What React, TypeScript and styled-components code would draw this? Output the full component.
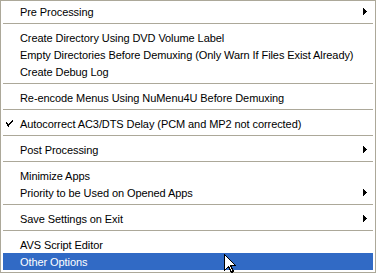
import * as React from "react";
import styled, { createGlobalStyle } from "styled-components";

const GlobalStyle = createGlobalStyle`
  html, body {
    margin: 0;
    padding: 0;
    background: #ffffff;
  }
`;

const Stage = styled.div`
  position: relative;
  width: 376px;
  height: 273px;
  overflow: hidden;
`;

const Menu = styled.ul`
  list-style: none;
  margin: 0;
  width: 376px;
  height: 273px;
  box-sizing: border-box;
  padding: 2px;
  border: 1px solid #aca899;
  background: #ffffff;
  font-family: Tahoma, "Liberation Sans", Arial, sans-serif;
  font-size: 11px;
  letter-spacing: -0.08px;
  color: #000000;
`;

const Item = styled.li<{ $active?: boolean }>`
  position: relative;
  height: 17px;
  display: flex;
  align-items: center;
  padding: 0 6px 0 17px;
  white-space: nowrap;
  background: ${(props) => (props.$active ? "#316ac5" : "transparent")};
  color: ${(props) => (props.$active ? "#ffffff" : "#000000")};
`;

const Label = styled.span`
  flex: 1;
`;

const Separator = styled.li`
  height: 9px;
  position: relative;

  &::before {
    content: "";
    position: absolute;
    left: 0;
    right: 0;
    top: 3px;
    height: 1px;
    background: #aca899;
  }
`;

const CheckMark = styled.svg`
  position: absolute;
  left: 3px;
  top: 5px;
`;

const Arrow = styled.svg`
  flex: none;
`;

const Cursor = styled.svg`
  position: absolute;
  left: 224px;
  top: 254px;
`;

type Entry =
  | { kind: "sep" }
  | { kind: "item"; label: string; sub?: boolean; checked?: boolean; active?: boolean };

const entries: Entry[] = [
  { kind: "item", label: "Pre Processing", sub: true },
  { kind: "sep" },
  { kind: "item", label: "Create Directory Using DVD Volume Label" },
  { kind: "item", label: "Empty Directories Before Demuxing (Only Warn If Files Exist Already)" },
  { kind: "item", label: "Create Debug Log" },
  { kind: "sep" },
  { kind: "item", label: "Re-encode Menus Using NuMenu4U Before Demuxing" },
  { kind: "sep" },
  { kind: "item", label: "Autocorrect AC3/DTS Delay (PCM and MP2 not corrected)", checked: true },
  { kind: "sep" },
  { kind: "item", label: "Post Processing", sub: true },
  { kind: "sep" },
  { kind: "item", label: "Minimize Apps" },
  { kind: "item", label: "Priority to be Used on Opened Apps", sub: true },
  { kind: "sep" },
  { kind: "item", label: "Save Settings on Exit", sub: true },
  { kind: "sep" },
  { kind: "item", label: "AVS Script Editor" },
  { kind: "item", label: "Other Options", active: true },
];

function SubArrow() {
  return (
    <Arrow width="4" height="7" viewBox="0 0 4 7">
      <path d="M0 0h1v7H0zM1 1h1v5H1zM2 2h1v3H2zM3 3h1v1H3z" fill="#000" />
    </Arrow>
  );
}

function Tick() {
  return (
    <CheckMark width="7" height="7" viewBox="0 0 7 7">
      <path
        d="M6 0h1v1H6zM5 1h2v1H5zM4 2h2v1H4zM0 2h1v1H0zM0 3h2v1H0zM3 3h2v1H3zM1 4h3v1H1zM1 5h2v1H1zM2 6h1v1H2z"
        fill="#000"
      />
    </CheckMark>
  );
}

export default function App() {
  return (
    <Stage>
      <GlobalStyle />
      <Menu>
        {entries.map((entry, i) =>
          entry.kind === "sep" ? (
            <Separator key={i} />
          ) : (
            <Item key={i} $active={entry.active}>
              {entry.checked && <Tick />}
              <Label>{entry.label}</Label>
              {entry.sub && <SubArrow />}
            </Item>
          )
        )}
      </Menu>
      <Cursor width="12" height="19" viewBox="0 0 12 19">
        <path
          d="M0.5 0.5 L0.5 16.5 L4.5 12.5 L7.5 18.5 L9.5 17.5 L6.5 11.5 L11.5 11.5 Z"
          fill="#fff"
          stroke="#000"
          strokeWidth="1"
          shapeRendering="crispEdges"
        />
      </Cursor>
    </Stage>
  );
}
